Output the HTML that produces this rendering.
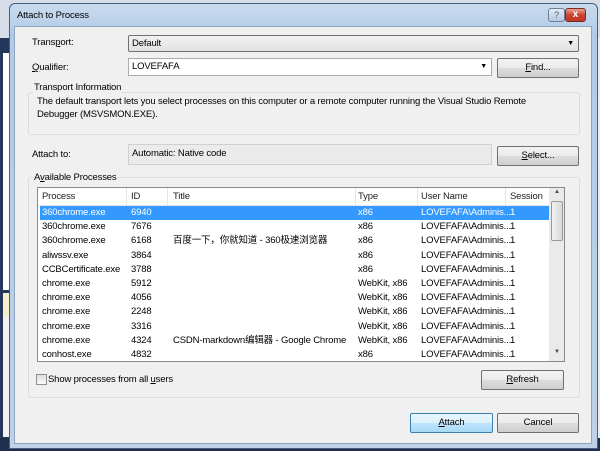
<!DOCTYPE html>
<html><head><meta charset="utf-8"><style>
*{margin:0;padding:0;box-sizing:border-box}
body{width:600px;height:451px;overflow:hidden;background:#1e2f4e;position:relative;font-family:"Liberation Sans","Noto Sans CJK SC",sans-serif;font-size:9.5px;letter-spacing:-0.15px;color:#000}
.a{position:absolute;white-space:nowrap}
.btn{position:absolute;border:1px solid #707070;border-radius:2px;background:linear-gradient(#f2f2f2 0,#ebebeb 50%,#dddddd 51%,#cfcfcf 100%);text-align:center;line-height:17px}
.grp{position:absolute;border:1px solid #d8dde3;border-radius:3px}
u{text-decoration:underline}
.row{position:absolute;height:14px;line-height:14px}
.row span{position:absolute}
</style></head><body>
<div class="a" style="left:0;top:0;width:600px;height:38px;background:#d6dde8"></div>
<div class="a" style="left:0;top:38px;width:10px;height:400px;background:#24375a"></div>
<div class="a" style="left:3px;top:53px;width:7px;height:237px;background:#fdfdfd"></div>
<div class="a" style="left:3px;top:293px;width:7px;height:24px;background:#f4f0c8"></div>
<div class="a" style="left:3px;top:317px;width:7px;height:120px;background:#f2f2f2"></div>
<div class="a" style="left:590px;top:38px;width:10px;height:400px;background:#e8edf3"></div>
<!-- window frame -->
<div class="a" style="left:9px;top:3px;width:589px;height:446px;border:1px solid #4a5f7c;border-radius:6px 6px 0 0;background:linear-gradient(#c9dbef,#b3cae6 30px,#bed1e8)"></div>
<div class="a" style="left:17px;top:10px">Attach to Process</div>
<div class="a" style="left:548px;top:8px;width:17px;height:14px;border:1px solid #6b7e9a;border-radius:3px;background:linear-gradient(#e1ebf7,#b6c9e2);color:#555;font-size:9px;text-align:center;line-height:12px">?</div>
<div class="a" style="left:565px;top:8px;width:21px;height:14px;border:1px solid #7a2a20;border-radius:3px;background:linear-gradient(#e8a192,#c8442d 50%,#c0392b);color:#fff;font-size:10px;font-weight:bold;text-align:center;line-height:12px">x</div>
<!-- client -->
<div class="a" style="left:14px;top:26px;width:578px;height:418px;background:#f0f0f0;border:1px solid #8ea4c1"></div>
<div class="a" style="left:32px;top:37px">Trans<u>p</u>ort:</div>
<div class="a" style="left:128px;top:35px;width:451px;height:17px;border:1px solid #707070;border-radius:2px;background:linear-gradient(#f2f2f2,#e2e2e2);padding-left:3px;line-height:15px">Default<span style="position:absolute;right:4px;font-size:7px">▼</span></div>
<div class="a" style="left:32px;top:62px"><u>Q</u>ualifier:</div>
<div class="a" style="left:128px;top:58px;width:364px;height:18px;border:1px solid #ababab;background:#fff;padding-left:3px;line-height:16px">LOVEFAFA<span style="position:absolute;right:4px;font-size:7px">▼</span></div>
<div class="btn" style="left:497px;top:58px;width:82px;height:20px"><u>F</u>ind...</div>
<div class="grp" style="left:28px;top:92px;width:552px;height:43px"></div>
<div class="a" style="left:33px;top:82px;background:#f0f0f0;padding:0 1px">Transport Information</div>
<div class="a" style="left:37px;top:95px;line-height:13px">The default transport lets you select processes on this computer or a remote computer running the Visual Studio Remote<br>Debugger (MSVSMON.EXE).</div>
<div class="a" style="left:32px;top:149px">Attach to:</div>
<div class="a" style="left:128px;top:144px;width:364px;height:21px;border:1px solid #d0d0d0;background:#ebebeb;padding:3px 0 0 3px">Automatic: Native code</div>
<div class="btn" style="left:497px;top:146px;width:82px;height:20px"><u>S</u>elect...</div>
<div class="grp" style="left:28px;top:177px;width:552px;height:221px"></div>
<div class="a" style="left:33px;top:172px;background:#f0f0f0;padding:0 1px">A<u>v</u>ailable Processes</div>
<!-- list -->
<div class="a" style="left:37px;top:187px;width:528px;height:175px;border:1px solid #828790;background:#fff;overflow:hidden">
 <div class="a" style="left:0;top:0;width:511px;height:18px;border-bottom:1px solid #e5e5e5;line-height:18px;color:#222">
  <span class="a" style="left:4px">Process</span><span class="a" style="left:93px">ID</span><span class="a" style="left:135px">Title</span><span class="a" style="left:320px">Type</span><span class="a" style="left:383px">User Name</span><span class="a" style="left:472px">Session</span>
  <span class="a" style="left:88px;top:0;width:1px;height:18px;background:#e5e5e5"></span><span class="a" style="left:129px;top:0;width:1px;height:18px;background:#e5e5e5"></span><span class="a" style="left:317px;top:0;width:1px;height:18px;background:#e5e5e5"></span><span class="a" style="left:379px;top:0;width:1px;height:18px;background:#e5e5e5"></span><span class="a" style="left:467px;top:0;width:1px;height:18px;background:#e5e5e5"></span>
 </div>
 <div id="rows"></div>
 <div class="a" style="left:511px;top:0;width:16px;height:173px;background:#eaeaea"></div>
 <div class="a" style="left:513px;top:13px;width:12px;height:40px;border:1px solid #9a9a9a;border-radius:2px;background:linear-gradient(90deg,#f2f2f2,#d8d8d8)"></div>
 <div class="a" style="left:516px;top:1px;font-size:6px;color:#444">▲</div>
 <div class="a" style="left:516px;top:161px;font-size:6px;color:#444">▼</div>
</div>
<script>
var d=[["360chrome.exe","6940","","x86"],["360chrome.exe","7676","","x86"],["360chrome.exe","6168","百度一下，你就知道 - 360极速浏览器","x86"],["aliwssv.exe","3864","","x86"],["CCBCertificate.exe","3788","","x86"],["chrome.exe","5912","","WebKit, x86"],["chrome.exe","4056","","WebKit, x86"],["chrome.exe","2248","","WebKit, x86"],["chrome.exe","3316","","WebKit, x86"],["chrome.exe","4324","CSDN-markdown编辑器 - Google Chrome","WebKit, x86"],["conhost.exe","4832","","x86"]];
var h="";d.forEach(function(r,i){var s=i==0?"background:#3399ff;color:#fff;":"";h+='<div class="row" style="top:'+(18+i*14.2)+'px;left:2px;width:509px;'+s+'"><span style="left:2px">'+r[0]+'</span><span style="left:91px">'+r[1]+'</span><span style="left:133px">'+r[2]+'</span><span style="left:318px">'+r[3]+'</span><span style="left:381px">LOVEFAFA\\Adminis...</span><span style="left:470px">1</span></div>';});
document.getElementById("rows").innerHTML=h;
</script>
<div class="a" style="left:36px;top:374px;width:11px;height:11px;border:1px solid #8f8f8f;background:linear-gradient(#dedede,#fafafa)"></div>
<div class="a" style="left:48px;top:374px">Show processes from all <u>u</u>sers</div>
<div class="btn" style="left:481px;top:370px;width:83px;height:20px"><u>R</u>efresh</div>
<div class="btn" style="left:410px;top:413px;width:83px;height:20px;border-color:#3c7fb1;background:linear-gradient(#eaf6fd,#d9f0fc 50%,#bee6fd 51%,#a7d9f5)"><u>A</u>ttach</div>
<div class="btn" style="left:497px;top:413px;width:82px;height:20px">Cancel</div>
</body></html>
